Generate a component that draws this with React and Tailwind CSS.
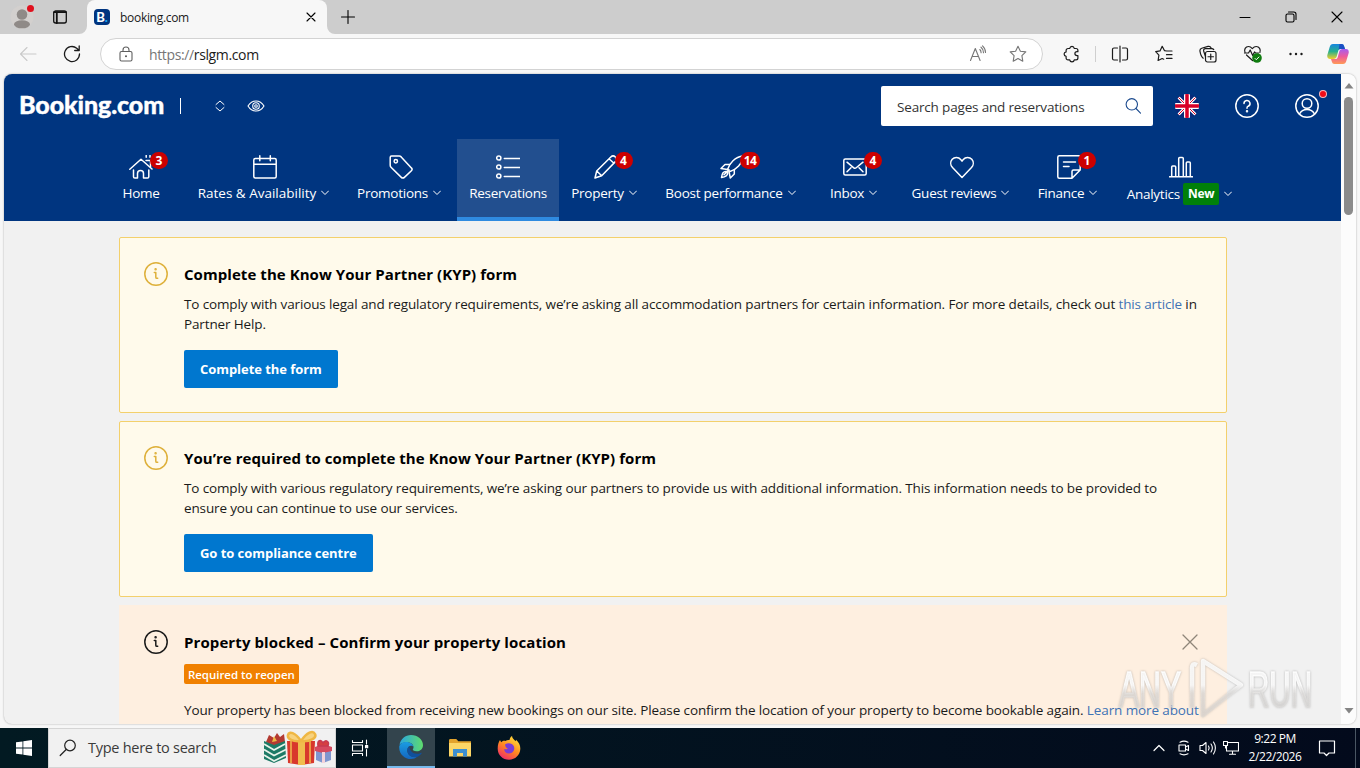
import clsx from 'clsx';

const Svg = ({ size = 24, vb = '0 0 24 24', sw = 1.5, className, children }) => (
  <svg width={size} height={size} viewBox={vb} fill="none" stroke="currentColor" strokeWidth={sw}
    strokeLinecap="round" strokeLinejoin="round" className={clsx('block shrink-0', className)}>
    {children}
  </svg>
);

const icons = {
  home: (
    <>
      <path d="M.8 14.2 12 4.2l11 9.8M4.5 15v6.7c0 .8.6 1.3 1.3 1.3h2.7v-4.5a3 3 0 0 1 6 0V23h4c.8 0 1.3-.5 1.3-1.3V15" />
      <path d="M17 5.5h4.5v6.5M17.2.5v1.8M21 .5v1.8" />
    </>
  ),
  calendar: <path d="M2.3 3.5h19.4c.9 0 1.5.6 1.5 1.5v16.5c0 .9-.6 1.5-1.5 1.5H2.3c-.9 0-1.5-.6-1.5-1.5V5c0-.9.6-1.5 1.5-1.5ZM.8 9.2h22.4M6.8.8v5M17.3.8v5" />,
  tag: (
    <>
      <path d="M1.2 2.4v7.8c0 .8.3 1.5.8 2l10.3 10.2c.9.9 2.2.9 3.1 0l7-6.7c.8-.8.8-2 0-2.8L12.2 1.9c-.5-.5-1.2-.8-2-.8H2.5c-.8 0-1.3.6-1.3 1.3Z" />
      <circle cx="6.8" cy="6.2" r="1.7" />
    </>
  ),
  list: (
    <>
      <circle cx="2.8" cy="3" r="2.1" /><circle cx="2.8" cy="12" r="2.1" /><circle cx="2.8" cy="21" r="2.1" />
      <path d="M8.3 3.5h15.7M8.3 12.5h15.7M8.3 21.5h15.7" />
    </>
  ),
  pencil: <path d="M1 23l1.7-7L16.8 2c1.3-1.3 3.3-1.3 4.6 0 1.3 1.3 1.3 3.3 0 4.6L7.7 20.8 1 23Zm1.7-7 5 4.8M15 3.8l5 4.4" />,
  rocket: (
    <>
      <path d="M7.5 14.5C9.5 8 15 2 23 1c-.8 8-6.5 13.5-13 15.500Z" />
      <path d="M9.8 9.5H5L1 13.5l6.5 1M14.3 14.5V19l-4 4-1.3-6.5M6.5 16.5C3.500 16 2 18.5 1.5 22.5c4-.5 6.5-2 6-5M4 19.8l5-5" />
    </>
  ),
  mail: <path d="M2.3 4h19.4c.9 0 1.5.6 1.5 1.5v13c0 .9-.6 1.5-1.5 1.5H2.3c-.9 0-1.5-.6-1.5-1.5v-13C.8 4.6 1.4 4 2.3 4ZM4 7.2l6.8 5.6c.7.6 1.7.6 2.4 0L20 7.2M4 16.8l4-4M20 16.8l-4-4" />,
  heart: <path d="M12 22.5 2.5 12.6C.3 10.2.2 6.6 2.2 4.3c2.3-2.5 6.3-2.4 8.5.2L12 6.1l1.3-1.6c2.2-2.6 6.2-2.7 8.5-.2 2 2.3 1.9 5.9-.3 8.3L12 22.5Z" />,
  note: <path d="M15 23.2H2.3c-.9 0-1.5-.6-1.5-1.5V2.3C.8 1.4 1.4.8 2.3.8h19.4c.9 0 1.5.6 1.5 1.5V15L15 23.2Zm0 0v-6.7c0-.8.7-1.5 1.5-1.5h6.7M6.5 7h12M6.5 11.5H12" />,
  chart: <path d="M.5 21.8h23M2.7 21.5V12c0-.7.4-1 1-1h2c.7 0 1 .4 1 1v9.5M9.7 21.5V3.5c0-.7.4-1 1-1h2.6c.7 0 1 .3 1 1v18M17.3 21.5V8c0-.7.4-1 1-1h2c.7 0 1 .4 1 1v13.5" />,
};

const nav = [
  { icon: 'home', label: 'Home', badge: '3', box: 'w-[62px]', noMenu: true },
  { icon: 'calendar', label: 'Rates & Availability', box: 'w-[158px] ml-[14px]', wide: true },
  { icon: 'tag', label: 'Promotions', box: 'w-[109px] ml-0.5' },
  { icon: 'list', label: 'Reservations', box: 'w-[102px] ml-0.5', active: true, noMenu: true },
  { icon: 'pencil', label: 'Property', badge: '4', box: 'w-[91px] ml-px' },
  { icon: 'rocket', label: 'Boost performance', badge: '14', box: 'w-[156px] ml-[3px]' },
  { icon: 'mail', label: 'Inbox', badge: '4', box: 'w-[74px] ml-2' },
  { icon: 'heart', label: 'Guest reviews', box: 'w-[124px] ml-2' },
  { icon: 'note', label: 'Finance', badge: '1', box: 'w-[86px] ml-0.5' },
  { icon: 'chart', label: 'Analytics', box: 'w-[132px] ml-[3px]', isNew: true },
];

function TabStrip() {
  return (
    <div className="h-[34px] shrink-0 flex items-center bg-[#cdcdcd]">
      <div className="relative w-6 h-6 ml-[10px]">
        <svg width="24" height="24" viewBox="0 0 24 24" className="block">
          <circle cx="12" cy="12" r="11.5" fill="#d3d0ce" />
          <circle cx="12" cy="9.5" r="5.3" fill="#8f8a87" />
          <ellipse cx="12" cy="19.3" rx="8" ry="4" fill="#8f8a87" />
        </svg>
        <span className="absolute left-[17px] top-0 w-[7px] h-[7px] rounded-full bg-[#e0101e]" />
      </div>
      <Svg size={16} vb="0 0 16 16" sw={1.3} className="ml-[18px] mr-[19px] text-[#111]">
        <rect x="1.7" y="2" width="12.6" height="12" rx="2" />
        <path d="M2 3.2h12M4.8 3.5V14" strokeWidth="1.8" />
      </Svg>
      <div className="relative w-60 h-[34px] flex items-center bg-[#f7f7f7] rounded-t-lg">
        <svg width="256" height="8" viewBox="0 0 256 8" className="absolute -left-2 bottom-0" fill="#f7f7f7">
          <path d="M0 8a8 8 0 0 0 8-8v8ZM256 8a8 8 0 0 1-8-8v8Z" />
        </svg>
        <div className="w-4 h-4 ml-[7px] rounded-sm bg-[#003580] text-white flex items-center justify-center font-[Lato] text-[13px] leading-4 font-black">
          B<span className="text-[#1ba1f2]">.</span>
        </div>
        <span className="ml-2.5 mt-px text-[12px] tracking-[-0.3px] text-[#1a1a1a]">booking.com</span>
        <Svg size={10} vb="0 0 10 10" sw={1.1} className="ml-auto mr-[11px] text-black"><path d="M1 1l8 8M9 1 1 9" /></Svg>
      </div>
      <Svg size={14} vb="0 0 14 14" sw={1.1} className="ml-[14px] text-black"><path d="M7 .5v13M.5 7h13" /></Svg>
      <div className="ml-auto flex items-center text-black">
        <Svg size={12} vb="0 0 12 12" sw={1} className="mr-[34px]"><path d="M1 6.5h10" /></Svg>
        <Svg size={12} vb="0 0 12 12" sw={1.1} className="mr-[34px]">
          <rect x="1" y="3" width="8" height="8" rx="1.5" />
          <path d="M3.5 1h5.3C10 1 11 2 11 3.2v5.3" />
        </Svg>
        <Svg size={12} vb="0 0 12 12" sw={1.1} className="mr-[17px]"><path d="M1 1l10 10M11 1 1 11" /></Svg>
      </div>
    </div>
  );
}

function Toolbar() {
  return (
    <div className="h-10 shrink-0 flex items-center bg-[#f7f7f7] text-[#1b1b1b]">
      <Svg size={18} vb="0 0 18 18" sw={1.1} className="ml-[19px] text-[#c9c9c9]"><path d="M17 9H1.5M8 2.5 1.5 9 8 15.5" /></Svg>
      <Svg size={18} vb="0 0 18 18" sw={1.3} className="ml-[26px]"><path d="M16.5 9A7.5 7.5 0 1 1 13.7 3.2L16 5.3M16.2 1v4.5h-4.5" /></Svg>
      <div className="ml-[19px] w-[943px] h-8 rounded-full border border-[#d3d3d3] bg-white flex items-center">
        <Svg size={16} vb="0 0 16 16" sw={1.1} className="ml-[17px] text-[#5f5f5f]">
          <rect x="2" y="5.5" width="12" height="9.5" rx="1.5" />
          <path d="M5 5.5V4a3 3 0 0 1 6 0v1.5" />
          <circle cx="8" cy="10.2" r=".5" fill="currentColor" />
        </Svg>
        <span className="ml-[15px] text-[14px] tracking-[-0.37px] text-[#1b1b1b]"><span className="text-[#767676]">https://</span>rslgm.com</span>
        <Svg size={18} vb="0 0 18 18" sw={1.1} className="ml-auto text-[#767676]">
          <path d="M1.5 15.5 6.3 3.5l4.8 12M3.1 11.5h6.4M10.8 4.5c.9.8 1.3 2 1.3 3.2M12 2.2c1.7 1.3 2.5 3.3 2.5 5.5M13.500.8c1.9 1.7 3 4 3 6.7" />
        </Svg>
        <Svg size={18} vb="0 0 18 18" sw={1.1} className="ml-[22px] mr-[15px] text-[#767676]">
          <path d="m9 1.2 2.4 5 5.4.7-3.9 3.8.9 5.5L9 13.6l-4.8 2.6.9-5.5L1.2 6.9l5.4-.7L9 1.2Z" />
        </Svg>
      </div>
      <Svg size={18} vb="0 0 18 18" sw={1.2} className="ml-5">
        <path d="M5 3.5h1.7c.2-1.3 1.1-2.1 2.3-2.1s2.1.8 2.3 2.1H13a1.9 1.9 0 0 1 1.9 1.9v1.3h-.8c-1.4 0-2.2.8-2.2 1.9s.8 2 2.2 2h.8V13a1.9 1.9 0 0 1-1.9 1.9h-1.7c-.2 1.3-1.1 2-2.3 2s-2.1-.7-2.3-2H5A1.9 1.9 0 0 1 3.1 13v-1.7c-1.3-.2-2-1-2-2.2s.7-2 2-2.2V5.4A1.9 1.9 0 0 1 5 3.5Z" />
      </Svg>
      <span className="w-px h-4 bg-[#cfcfcf] ml-[14px]" />
      <Svg size={18} vb="0 0 18 18" sw={1.2} className="ml-[15px]">
        <path d="M6.5 3H3a1.5 1.5 0 0 0-1.5 1.5v9A1.5 1.5 0 0 0 3 15h3.5M11.5 3H15a1.5 1.5 0 0 1 1.5 1.5v9A1.5 1.5 0 0 1 15 15h-3.5M9 1v16" />
      </Svg>
      <Svg size={18} vb="0 0 18 18" sw={1.2} className="ml-[26px]">
        <path d="M17 6h-5.3L9.4 5.6 7.2 1.3 5 5.9l-4.3.8 3.2 3.5-.8 5.3 4.1-2 1.5.7M11.5 9.7H17M11.5 13.4H17" />
      </Svg>
      <Svg size={18} vb="0 0 18 18" sw={1.2} className="ml-[26px]">
        <rect x="6.5" y="6.5" width="10.5" height="10.5" rx="2" />
        <path d="M11.75 9v5.5M9 11.75h5.5M4.2 13.2C2.6 12 1.4 8.6 1 6.300c-.3-1.700.4-2.700 1.700-3.100L9 1.400c1.500-.4 2.500.2 3 1.400M6.500 11.500 4.800 6.500c-.5-1.500 0-2.500 1.400-2.900h6.600c.8 0 1.500.3 1.900 1" />
      </Svg>
      <div className="relative ml-[26px]">
        <Svg size={20} vb="0 0 20 20" sw={1.2}>
          <path d="M2 8.500C.8 5.500 2.500 2.500 5.500 2.500c1.800 0 2.900 1 3.800 2.100 1-1.100 2.100-2.100 3.900-2.100 3.100 0 4.800 3 3.700 6M3.500 11l6 5.500M1.500 9h4l1.700-3 2.500 5.500L11.500 8l1 1h3" />
        </Svg>
        <svg width="10" height="10" viewBox="0 0 10 10" className="absolute left-[9px] top-[9px]">
          <circle cx="5" cy="5" r="4.8" fill="#107c10" />
          <path d="m2.8 5.2 1.5 1.5 2.9-3" stroke="#fff" fill="none" />
        </svg>
      </div>
      <Svg size={16} vb="0 0 16 16" className="ml-[25px]">
        <g fill="currentColor" stroke="none"><circle cx="2.5" cy="8" r="1.2" /><circle cx="8" cy="8" r="1.2" /><circle cx="13.5" cy="8" r="1.2" /></g>
      </Svg>
      <svg width="22" height="22" viewBox="0 0 22 22" className="ml-[23px]">
        <defs>
          <linearGradient id="cpA" x1="0" y1="0" x2="0" y2="1"><stop offset="0" stopColor="#1685e0" /><stop offset=".5" stopColor="#27b08d" /><stop offset="1" stopColor="#f3cf2b" /></linearGradient>
          <linearGradient id="cpB" x1="0" y1="0" x2="0" y2="1"><stop offset="0" stopColor="#a65cf0" /><stop offset=".5" stopColor="#ee5a9c" /><stop offset="1" stopColor="#ff9a55" /></linearGradient>
        </defs>
        <path d="M6 1h8.500c1.500 0 2.200.8 2.700 2.500L18 6h-4.500c-1.200 0-1.900.7-2.200 1.800l-1.500 5.400C9.300 15 8.300 16 6.500 16H3c-2.300 0-3.200-2-2.600-4.300L2.700 4C3.300 2 4.200 1 6 1Z" fill="url(#cpA)" />
        <path d="M16 21H7.500c-1.500 0-2.200-.8-2.700-2.500L4 16h4.500c1.200 0 1.900-.7 2.200-1.800l1.500-5.400C12.700 7 13.700 6 15.500 6H19c2.300 0 3.200 2 2.600 4.300L19.300 18c-.6 2-1.500 3-3.300 3Z" fill="url(#cpB)" />
        <path d="M12.500 1h2c1.500 0 2.200.8 2.700 2.500L18 6h-4.500c-1 0-1.700.5-2 1.200Z" fill="#1b4fc4" />
      </svg>
    </div>
  );
}

function NavItem({ item }) {
  return (
    <div className={clsx('h-[82px] flex flex-col items-center pt-4 shrink-0 border-b-4', item.box,
      item.active ? 'bg-[#224f8f] border-[#2f8ae0]' : 'border-transparent')}>
      <div className="relative">
        <Svg>{icons[item.icon]}</Svg>
        {item.badge && (
          <span className={clsx('absolute -top-[3px] h-[17px] rounded-full bg-[#cc0000] text-[12px] leading-[17px] font-bold text-center',
            item.badge.length > 1 ? 'left-5 w-5 tracking-[-0.5px]' : 'left-[21px] w-[18px]')}>
            {item.badge}
          </span>
        )}
      </div>
      <div className={clsx('flex items-center h-5 whitespace-nowrap text-[13.5px]',
        item.isNew ? 'mt-[5px]' : 'mt-1', item.wide ? '' : 'tracking-[-0.25px]', !item.noMenu && 'mr-[3px]')}>
        {item.label}
        {item.isNew && <span className="ml-[3px] h-[22px] px-[5px] rounded-xs bg-[#008009] text-[12px] leading-[22px] font-bold">New</span>}
        {!item.noMenu && <Svg size={8} vb="0 0 8 8" sw={1} className="ml-[5px]"><path d="m.5 2 3.5 3.5L7.5 2" /></Svg>}
      </div>
    </div>
  );
}

function Flag() {
  return (
    <svg width="24" height="24" viewBox="0 0 24 24" className="block">
      <clipPath id="flag"><circle cx="12" cy="12" r="12" /></clipPath>
      <g clipPath="url(#flag)">
        <path d="M0 0h24v24H0z" fill="#0a2a7a" />
        <path d="m0 0 24 24M24 0 0 24" stroke="#fff" strokeWidth="3" />
        <path d="m0 0 24 24M24 0 0 24" stroke="#d80027" strokeWidth="1" />
        <path d="M12 0v24M0 12h24" stroke="#fff" strokeWidth="6" />
        <path d="M12 0v24M0 12h24" stroke="#d80027" strokeWidth="3.5" />
      </g>
    </svg>
  );
}

function Header() {
  return (
    <header className="h-[147px] bg-[#003580] text-white">
      <div className="h-[65px] pb-px flex items-center">
        <span className="ml-[15px] w-[146px] pb-[4px] font-[Lato] font-black text-[25px] leading-none tracking-[-0.1px] [-webkit-text-stroke:0.4px_white]">Booking.com</span>
        <span className="ml-[15px] w-px h-4 bg-white" />
        <Svg size={12} vb="0 0 12 12" sw={1} className="ml-[33px]"><path d="M2 4.5 6 1l4 3.5M2 7.5 6 11l4-3.5" /></Svg>
        <Svg size={18} vb="0 0 18 18" sw={1.1} className="ml-[21px]">
          <path d="M1 9c2-3.3 4.8-5 8-5s6 1.7 8 5c-2 3.3-4.8 5-8 5s-6-1.7-8-5Z" />
          <circle cx="9" cy="9" r="3.3" /><circle cx="9" cy="9" r="1.3" />
        </Svg>
        <div className="ml-auto w-[272px] h-10 rounded-xs bg-white flex items-center justify-between pl-4 pr-3">
          <span className="mt-0.5 text-[13.5px] tracking-[-0.17px] text-[#333]">Search pages and reservations</span>
          <Svg size={16} vb="0 0 16 16" sw={1.1} className="text-[#1b4a8e]"><circle cx="6.8" cy="6.3" r="5.7" /><path d="m11 10.5 4.5 4.7" /></Svg>
        </div>
        <div className="ml-[22px]"><Flag /></div>
        <Svg className="ml-9">
          <circle cx="12" cy="12" r="11.2" />
          <path d="M9 9.5a3 3 0 1 1 4.2 2.7c-.8.4-1.2.9-1.2 1.8v.3" />
          <circle cx="12" cy="17.3" r=".5" fill="currentColor" />
        </Svg>
        <div className="relative ml-9 mr-[22px]">
          <Svg>
            <circle cx="12" cy="12" r="11.2" /><circle cx="12" cy="9.5" r="4.8" />
            <path d="M4.5 20c1.5-3 4.3-4.5 7.5-4.5s6 1.5 7.5 4.5" />
          </Svg>
          <span className="absolute left-6 -top-1 w-2 h-2 rounded-full bg-[#f00c18] border border-white/70" />
        </div>
      </div>
      <nav className="flex pl-[106px]">
        {nav.map(item => <NavItem key={item.label} item={item} />)}
      </nav>
    </header>
  );
}

const InfoIcon = ({ className }) => (
  <Svg className={className}>
    <circle cx="12" cy="12" r="11.2" />
    <path d="M10.3 10.5h1.5v4.7c0 .7.5 1.1 1.1 1.1h.8" />
    <circle cx="11.6" cy="7.3" r=".5" fill="currentColor" />
  </Svg>
);

function Notice({ title, button, children }) {
  return (
    <section className="h-44 mb-2 flex border border-[#f3d06c] rounded-xs bg-[#fffaeb] p-6">
      <InfoIcon className="text-[#deb03a]" />
      <div className="ml-4 flex flex-col items-start">
        <h2 className="text-[15px] leading-6 tracking-[0.06px] font-bold text-black whitespace-nowrap">{title}</h2>
        <p className="mt-2 text-[13.5px] leading-5 tracking-[-0.135px] text-[#1a1a1a] whitespace-nowrap">{children}</p>
        <button className="mt-4 h-[38px] px-4 pt-0.5 rounded-xs bg-[#0077cf] text-white text-[13px] tracking-[-0.05px] font-bold whitespace-nowrap">{button}</button>
      </div>
    </section>
  );
}

function ScrollBar() {
  return (
    <div className="w-[15px] shrink-0 flex flex-col items-center bg-[#fcfcfc]">
      <svg width="10" height="6" viewBox="0 0 10 6" className="mt-[9px]"><path d="M5 0l4.5 5.5h-9Z" fill="#858585" /></svg>
      <div className="mt-2 w-[9px] h-[118px] rounded-full bg-[#8b8b8b]" />
      <svg width="10" height="6" viewBox="0 0 10 6" className="mt-auto mb-[10px]"><path d="M5 5.5.5 0h9Z" fill="#858585" /></svg>
    </div>
  );
}

function Watermark() {
  return (
    <svg width="204" height="70" viewBox="0 0 204 70" className="absolute left-[1114px] top-[654px] drop-shadow-[0_0_1px_rgba(110,110,110,0.5)]">
      <defs>
        <linearGradient id="wm" gradientUnits="userSpaceOnUse" x1="0" y1="4" x2="0" y2="64">
          <stop offset=".45" stopColor="#fff" stopOpacity=".85" />
          <stop offset=".6" stopColor="#e4e2e0" stopOpacity=".6" />
          <stop offset="1" stopColor="#d8d6d4" stopOpacity=".5" />
        </linearGradient>
      </defs>
      <g fill="url(#wm)" stroke="url(#wm)" strokeWidth="1.6" className="font-['Liberation_Sans_Narrow','Liberation_Sans',sans-serif]">
        <text x="5" y="53" fontSize="50" textLength="62" lengthAdjust="spacingAndGlyphs">ANY</text>
        <text x="134" y="53" fontSize="50" textLength="64" lengthAdjust="spacingAndGlyphs">RUN</text>
      </g>
      <g fill="none" stroke="url(#wm)" strokeWidth="4.5" strokeLinejoin="round">
        <path d="M89 48V7L127 31 89 61V48" />
        <path d="M83 11c-4-2-5 0-5 3v40" />
      </g>
    </svg>
  );
}

function Gifts() {
  return (
    <svg width="70" height="36" viewBox="0 0 70 36" className="block">
      <path d="m3 12 3-7 5 3 3-5 3 4 4-3 1 8-10 5Z" fill="#b33a32" />
      <path d="m9 12 2-6 3 5" fill="#efb744" />
      <path d="m1 11 10 4 11-4 1 17-12 5L1 29Z" fill="#1d7a66" />
      <path d="m1 14 10 6 11-6M1 19.5l10 6 12-6M1 25l10 6 12-6" stroke="#e8f3ea" strokeWidth="1.8" fill="none" />
      <path d="M24 11h28l-1 22-13 2-13-2Z" fill="#d8382c" />
      <path d="M28 11v22M47 11v22" stroke="#f0bc4e" strokeWidth="1.5" />
      <path d="M35 11h7v24h-7Z" fill="#f0bc4e" />
      <path d="M38 11c-6-9-12-10-13-6s5 7 13 6c6-9 12-11 14-7s-5 8-14 7Z" stroke="#efb744" strokeWidth="2.5" fill="#f7d27e" />
      <path d="m53 20 15-1v11l-8 3-7-3Z" fill="#7f96cf" />
      <path d="m52 17 8-3 9 3v4l-9 2-8-2Z" fill="#d64a5f" />
      <path d="M55 16c-1-6 3-7 5-3 2-4 7-2 5 3Z" stroke="#c63a50" strokeWidth="1.5" fill="#d64040" />
      <path d="M59 22h3v11h-3Z" fill="#f3d3da" />
    </svg>
  );
}

function Taskbar() {
  return (
    <div className="h-10 shrink-0 flex items-center bg-gradient-to-r from-[#021a22] to-[#030a1c] text-white">
      <div className="w-12 flex justify-center">
        <svg width="16" height="16" viewBox="0 0 16 16" fill="#fff"><path d="M0 2.3 6.5 1.4v6.2H0ZM7.3 1.3 16 0v7.6H7.3ZM0 8.4h6.5v6.2L0 13.7ZM7.3 8.4H16V16l-8.7-1.3Z" /></svg>
      </div>
      <div className="w-72 h-10 flex items-center bg-[#f1f1f1] border border-[#d5d5d5]">
        <Svg size={18} vb="0 0 18 18" sw={1.2} className="ml-[10px] text-[#222]"><circle cx="11" cy="6.5" r="5.3" /><path d="m7.2 10.5-6 6" /></Svg>
        <span className="ml-[11px] text-[14.5px] tracking-[-0.27px] text-[#3b3b3b]">Type here to search</span>
        <div className="ml-auto mr-[2px]"><Gifts /></div>
      </div>
      <div className="w-[51px] pr-1 flex justify-center">
        <Svg size={18} vb="0 0 18 18" sw={1.1}>
          <path d="M1.5 1.5v2h10v-2M1.5 16.5v-2h10v2M1.5 6h10v6h-10ZM15.5 1v4M15.5 10.5V17" />
          <path d="M14.5 6.5h2.2v2.2h-2.2Z" fill="currentColor" />
        </Svg>
      </div>
      <div className="w-12 h-10 flex items-center justify-center bg-[#33444d] border-b-2 border-[#76b9ed]">
        <svg width="24" height="24" viewBox="0 0 24 24">
          <defs>
            <linearGradient id="edA" x1="0" y1="0" x2="1" y2="0"><stop offset="0" stopColor="#2aa6e0" /><stop offset="1" stopColor="#5fdc6d" /></linearGradient>
            <linearGradient id="edB" x1="0" y1="0" x2="0" y2="1"><stop offset="0" stopColor="#1b9de2" /><stop offset="1" stopColor="#1466c0" /></linearGradient>
          </defs>
          <path d="M.5 10C1.5 4 6.3 0 12 0c6.8 0 12 4.7 12 10 0 4-3 6.3-6.3 6.3-3 0-4.2-1.2-3.8-2 1.4-1.7.8-5.8-3.7-6.800C6 6.800 2 8 .5 10Z" fill="url(#edA)" />
          <path d="M.3 11C1.500 8 5 6.500 8.500 7c3.800.5 5.500 2.800 5.800 4.500-2-1.500-6-.5-6 4 0 4.500 5 8 10.200 6C16.500 23.200 14.500 24 12 24 5.300 24-.5 18.500.3 11Z" fill="url(#edB)" />
          <path d="M8.300 15.500c0-2 1-3.500 2.300-4.200-.3 4.200 3 7.700 7.900 7.500 1.500 0 2.800-.5 3.800-1 .4-.1.600.2.400.5-1 1.500-2.400 2.700-4 3.400-5.400 1.800-10.400-1.700-10.400-6.200Z" fill="#10509c" />
        </svg>
      </div>
      <div className="w-[50px] flex justify-center">
        <svg width="22" height="18" viewBox="0 0 22 18">
          <path d="M0 1.5C0 .6.5 0 1.3 0h6l2 2.2H22V17H0Z" fill="#e3a32c" />
          <path d="M0 4h22v13.5H0Z" fill="#fcd667" />
          <path d="M4 17.5V10h14v7.500h-4V14H8v3.500Z" fill="#3c8fd0" />
        </svg>
      </div>
      <div className="w-12 flex justify-center">
        <svg width="24" height="24" viewBox="0 0 24 24">
          <defs>
            <linearGradient id="fx" x1=".8" y1="0" x2=".2" y2="1"><stop offset="0" stopColor="#ffe23d" /><stop offset=".5" stopColor="#ff8a1f" /><stop offset="1" stopColor="#f0246e" /></linearGradient>
          </defs>
          <path d="M3 4c.3 1 .8 1.8 1.5 2.2C5.500 5 7 4.500 8.500 5c1-.8 2.500-1.200 4-1 .2-1.500 1-3 2.500-4 .3 2.500 2.300 3.800 3.800 5.300l.2-1.600C22 6.500 23.500 9.500 23.300 13c-.3 6-5 10.700-11.300 10.700S.7 19 .7 12.700C.7 9 1.500 6 3 4Z" fill="url(#fx)" />
          <path d="M8 8.500c3-2 7-1.500 8.700 1.500 1.600 3-.2 7.500-4.700 7.500-3.300 0-5-2.300-4.700-4.500 1 .6 2.300.5 3.500-.5-1.500-.4-2.500-1.500-2.800-4Z" fill="#7a3bd6" />
        </svg>
      </div>
      <div className="ml-auto flex items-center">
        <Svg size={12} vb="0 0 12 12" sw={1.2}><path d="M1 8.5l5-5 5 5" /></Svg>
        <Svg size={16} vb="0 0 16 16" sw={1.1} className="ml-[11px]">
          <rect x="3" y="5" width="6.5" height="6" /><path d="m9.5 7 3-1.500v5L9.500 9M4 2.200c2.500-1.300 5.500-1.300 8 0M4 13.800c2.500 1.300 5.500 1.300 8 0" />
        </Svg>
        <Svg size={18} vb="0 0 18 18" sw={1.1} className="ml-[7px]">
          <path d="M1 6.500h2.500L7 3.500v11L3.500 11.500H1ZM9.500 7c.8 1.200.8 2.800 0 4M12 5c1.700 2.500 1.700 5.500 0 8M14.500 3c2.500 3.500 2.500 8.500 0 12" />
        </Svg>
        <Svg size={16} vb="0 0 16 16" sw={1.1} className="ml-[6px]">
          <path d="M5 2.500h10.500V11h-12V6M.5 1.500h4v4h-4ZM2.500 5.500V8h1M9.500 11v3M6.500 14.200h6" />
        </Svg>
        <div className="ml-[6px] w-[60px] text-center text-[12px] leading-[18px] tracking-[-0.45px] whitespace-nowrap">
          <div>9:22 PM</div>
          <div>2/22/2026</div>
        </div>
        <Svg size={18} vb="0 0 18 18" sw={1.2} className="ml-[13px]"><path d="M1.5 2h15v12H11l-2.500 2.500L6 14H1.500Z" /></Svg>
        <span className="ml-[19px] mr-[4px] w-px h-10 bg-[#4a5663]" />
      </div>
    </div>
  );
}

export default function App() {
  return (
    <div className="relative w-[1360px] h-[768px] flex flex-col overflow-hidden bg-[#f7f7f7] font-['Open_Sans','Noto_Sans',sans-serif]">
      <TabStrip />
      <Toolbar />
      <div className="h-[650px] mx-1 mb-1 shrink-0 flex rounded-lg overflow-hidden bg-[#f1f1f1] shadow-[0_0_2px_rgba(0,0,0,0.35)]">
        <main className="w-[1337px] overflow-hidden">
          <Header />
          <div className="w-[1108px] ml-[115px] pt-4">
            <Notice title="Complete the Know Your Partner (KYP) form" button="Complete the form">
              To comply with various legal and regulatory requirements, we’re asking all accommodation partners for certain information. For more details, check out <a className="text-[#3f73b5]">this article</a> in
              <br />Partner Help.
            </Notice>
            <Notice title="You’re required to complete the Know Your Partner (KYP) form" button="Go to compliance centre">
              To comply with various regulatory requirements, we’re asking our partners to provide us with additional information. This information needs to be provided to
              <br />ensure you can continue to use our services.
            </Notice>
            <section className="h-44 flex bg-[#feefe0] p-[25px] text-[#1a1a1a]">
              <InfoIcon />
              <div className="w-[982px] ml-4 flex flex-col items-start">
                <h2 className="text-[15px] leading-6 tracking-[0.1px] font-bold text-black whitespace-nowrap">Property blocked – Confirm your property location</h2>
                <span className="mt-[10px] h-5 px-1 rounded-xs bg-[#f08000] text-white text-[11.5px] leading-[21px] tracking-[-0.05px] font-semibold whitespace-nowrap">Required to reopen</span>
                <p className="mt-4 text-[13.5px] leading-5 tracking-[-0.108px] text-[#1a1a1a] whitespace-nowrap">
                  Your property has been blocked from receiving new bookings on our site. Please confirm the location of your property to become bookable again. <a className="text-[#3f73b5]">Learn more about</a>
                </p>
              </div>
              <Svg size={16} vb="0 0 16 16" sw={1.3} className="mt-1 ml-4 text-[#8f8579]"><path d="m1 1 14 14M15 1 1 15" /></Svg>
            </section>
          </div>
        </main>
        <ScrollBar />
      </div>
      <Taskbar />
      <Watermark />
    </div>
  );
}
